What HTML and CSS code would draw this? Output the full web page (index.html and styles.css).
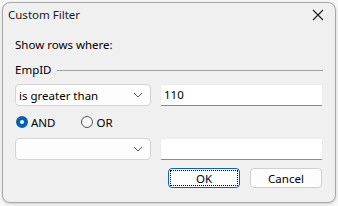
FILE: index.html
```html
<!DOCTYPE html>
<html>
<head>
<meta charset="utf-8">
<link rel="stylesheet" href="styles.css">
</head>
<body>
<div class="window">
  <div class="titlebar">
    <span class="title">Custom Filter</span>
    <svg class="close" width="12" height="12" viewBox="0 0 12 12"><path d="M1 1L11 11M11 1L1 11" stroke="#1a1a1a" stroke-width="1.1" fill="none"/></svg>
  </div>
  <div class="content">
    <div class="label">Show rows where:</div>
    <div class="group"><span>EmpID</span><span class="rule"></span></div>
    <div class="row">
      <div class="combo"><span>is greater than</span><svg class="chev" width="10" height="6" viewBox="0 0 10 6"><path d="M1 1L5 5L9 1" stroke="#606060" stroke-width="1" fill="none"/></svg></div>
      <div class="textbox">110</div>
    </div>
    <div class="radios">
      <span class="radio on"></span><span class="rlabel">AND</span>
      <span class="radio off"></span><span class="rlabel">OR</span>
    </div>
    <div class="row row2">
      <div class="combo"><span></span><svg class="chev" width="10" height="6" viewBox="0 0 10 6"><path d="M1 1L5 5L9 1" stroke="#606060" stroke-width="1" fill="none"/></svg></div>
      <div class="textbox"></div>
    </div>
    <div class="buttons">
      <div class="btn ok"><span class="focus">OK</span></div>
      <div class="btn">Cancel</div>
    </div>
  </div>
</div>
</body>
</html>
```
FILE: styles.css
```css
html, body {
  margin: 0;
  padding: 0;
}
body {
  width: 338px;
  height: 206px;
  background: #f7f7f7;
  font-family: "Noto Sans", "Open Sans", sans-serif;
  font-size: 11.5px;
  color: #000;
  overflow: hidden;
}
.window {
  margin: 2px 0 0 2px;
  width: 332px;
  height: 199px;
  border: 1px solid #a8a8a8;
  border-radius: 8px;
  background: #f0f0f0;
  box-shadow: 0 1px 3px rgba(0,0,0,0.18);
  box-sizing: content-box;
}
.titlebar {
  height: 23px;
  display: flex;
  align-items: center;
  justify-content: space-between;
  padding: 0 11px 0 5px;
}
.title {
  color: #1a1a1a;
}
.content {
  padding: 0 12px 0 12px;
}
.label {
  height: 16px;
  line-height: 16px;
  margin-top: 11px;
}
.group {
  display: flex;
  align-items: center;
  height: 16px;
  line-height: 16px;
  margin-top: 9px;
}
.rule {
  flex: 1;
  height: 1px;
  background: #a0a0a0;
  margin-left: 5px;
}
.row {
  display: flex;
  gap: 9px;
  margin-top: 6px;
  height: 22px;
}
.row2 {
  margin-top: 8px;
}
.combo {
  width: 136px;
  box-sizing: border-box;
  border: 1px solid #d4d4d4;
  border-radius: 4px;
  background: #fdfdfd;
  display: flex;
  align-items: center;
  justify-content: space-between;
  padding: 0 7px 0 3px;
}
.chev {
  display: block;
}
.textbox {
  flex: 1;
  box-sizing: border-box;
  background: #fff;
  border: 1px solid #ececec;
  border-bottom: 1px solid #8a8a8a;
  border-radius: 2px;
  padding: 0 3px;
  line-height: 20px;
}
.radios {
  display: flex;
  align-items: center;
  height: 16px;
  margin-top: 8px;
  padding-left: 1px;
}
.radio {
  width: 12px;
  height: 12px;
  border-radius: 50%;
  box-sizing: border-box;
}
.radio.on {
  border: 4px solid #0061b7;
  background: #fff;
}
.radio.off {
  border: 1px solid #555;
  background: #f8f8f8;
  margin-left: 26px;
}
.rlabel {
  margin-left: 3px;
}
.buttons {
  display: flex;
  justify-content: flex-end;
  gap: 10px;
  margin-top: 8px;
  padding-right: 1px;
}
.btn {
  width: 72px;
  height: 20px;
  box-sizing: border-box;
  border: 1px solid #d0d0d0;
  border-radius: 4px;
  background: #fdfdfd;
  display: flex;
  align-items: center;
  justify-content: center;
}
.btn.ok {
  border: 1px solid #0067c0;
  padding: 1px;
}
.focus {
  flex: 1;
  align-self: stretch;
  border: 1px dotted #000;
  display: flex;
  align-items: center;
  justify-content: center;
}
```
